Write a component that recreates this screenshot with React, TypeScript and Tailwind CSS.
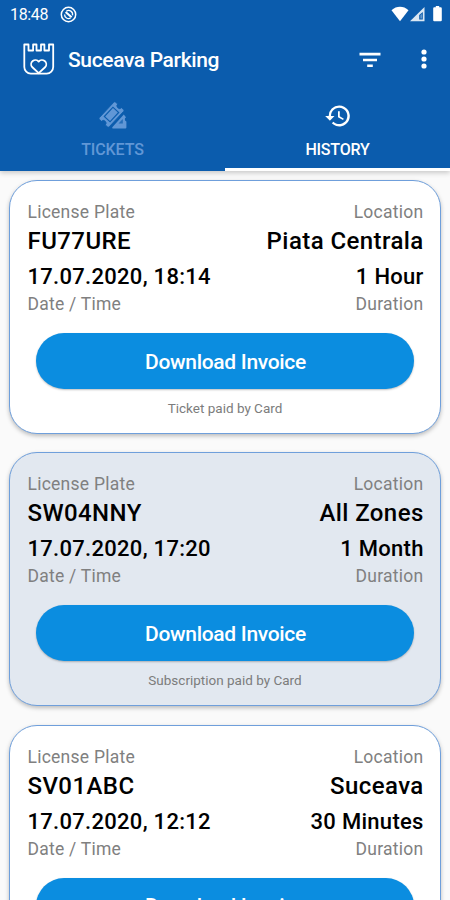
type Ticket = {
  plate: string;
  location: string;
  date: string;
  duration: string;
  note: string;
  shaded?: boolean;
};

const tickets: Ticket[] = [
  { plate: "FU77URE", location: "Piata Centrala", date: "17.07.2020, 18:14", duration: "1 Hour", note: "Ticket paid by Card" },
  { plate: "SW04NNY", location: "All Zones", date: "17.07.2020, 17:20", duration: "1 Month", note: "Subscription paid by Card", shaded: true },
  { plate: "SV01ABC", location: "Suceava", date: "17.07.2020, 12:12", duration: "30 Minutes", note: "Ticket paid by Card" },
];

function StatusBar() {
  return (
    <div className="flex h-7 items-center pl-[10px] pr-[7px] pt-[1px]">
      <span className="w-[39px] text-[16px] leading-5 tracking-[-0.35px]">18:48</span>
      <svg className="-mt-[1px] ml-[11px]" width="17" height="17" viewBox="0 0 17 17" fill="none" stroke="currentColor">
        <circle cx="8.5" cy="8.5" r="7.2" strokeWidth="1.5" />
        <path d="M4.6 8.4a4 4 0 0 0 6 3.6M6.4 5.1a4 4 0 0 1 6.1 4.2" strokeWidth="1.3" />
        <path d="M5.6 6 11.6 11.2" strokeWidth="2.1" />
      </svg>
      <svg className="-mt-[1px] ml-auto" width="52" height="18" viewBox="0 0 52 18" fill="currentColor">
        <path d="M0.5 5.2C5.5 0.7 12.5 0.7 17.5 5.2L9 16.2Z" />
        <path d="M33.5 2v14.2H19Z" fillOpacity="0.85" />
        <path d="M31.8 7v7.4h-3.6V10Z" fill="#0b5cad" />
        <path d="M30.6 9v4.6h-1V10Z" fillOpacity="0.6" />
        <path d="M43.3 2.3h1.5V1h3.4v1.3h1.5q1.1 0 1.1 1.1v11.8q0 1.1-1.1 1.1h-6.4q-1.1 0-1.1-1.1V3.4q0-1.1 1.1-1.1Z" />
      </svg>
    </div>
  );
}

function Toolbar() {
  return (
    <div className="flex h-16 items-center pl-[22px] pr-[19.5px]">
      <svg className="-mt-[2px]" width="33" height="34" viewBox="0 0 33 34" fill="none" stroke="currentColor" strokeWidth="1.8" strokeLinejoin="round">
        <path d="M2.3 2.5h4.2v6h4.6v-6h3.4v6H19v-6h3.4v6H27v-6h4.2v22.6a6.5 6.5 0 0 1-6.5 6.5H8.8a6.5 6.5 0 0 1-6.5-6.5Z" />
        <path d="M16.7 31.2 10.1 25a4.1 4.1 0 0 1 6.6-5.4 4.1 4.1 0 0 1 6.6 5.4Z" />
      </svg>
      <h1 className="ml-[13px] text-[21px] font-medium leading-7 tracking-[-0.36px] whitespace-nowrap">Suceava Parking</h1>
      <svg className="-mt-[1px] ml-auto" width="22" height="16" viewBox="0 0 22 16" fill="currentColor">
        <path d="M0.5 0.8h21v2.6h-21zM4 6.8h14v2.5H4zM8.2 12.5h5.6v2.4H8.2z" />
      </svg>
      <svg className="-mt-[2px] ml-[36px]" width="14" height="22" viewBox="0 0 14 22" fill="currentColor">
        <circle cx="7" cy="4" r="2.6" />
        <circle cx="7" cy="11" r="2.6" />
        <circle cx="7" cy="18" r="2.6" />
      </svg>
    </div>
  );
}

function Tabs() {
  return (
    <div className="grid h-[79px] grid-cols-2 text-[16px] font-medium leading-5">
      <div className="flex flex-col items-center pt-[9px] text-[#6197d6]">
        <svg width="30" height="30" viewBox="0 0 30 30" fill="currentColor">
          <path d="M25.8 13.6 28 16.2a2.3 2.3 0 0 0 .4 4.2v6.2a1 1 0 0 1-1 1H15.2a1 1 0 0 1-.7-1.7Z" />
          <path d="m20.5 22.5 4.3-4.5v4.5Z" fill="#0b5cad" fillOpacity="0.7" />
          <g transform="rotate(-47 13.5 13.5)" stroke="#0b5cad" strokeWidth="0.8">
            <path d="M3 6.8h21a1.3 1.3 0 0 1 1.3 1.3v2.8a2.6 2.6 0 0 0 0 5.2v2.8a1.3 1.3 0 0 1-1.3 1.3H3a1.3 1.3 0 0 1-1.3-1.3v-2.8a2.6 2.6 0 0 0 0-5.2V8.1A1.3 1.3 0 0 1 3 6.8Z" />
            <path d="M7.2 9.6h12.6v7.8H7.2z" strokeWidth="1.2" />
          </g>
        </svg>
        <span className="mt-[9px] tracking-[-0.1px]">TICKETS</span>
      </div>
      <div className="flex flex-col items-center border-b-[3px] border-white pt-[10px]">
        <svg width="28" height="28" viewBox="0 0 24 24" fill="currentColor">
          <path d="M13 3a9 9 0 0 0-9 9H1l3.9 3.9.1.1L9 12H6a7 7 0 1 1 2.1 4.9l-1.4 1.4A9 9 0 1 0 13 3Zm-1 5v5l4.3 2.5.7-1.2-3.5-2.1V8H12Z" />
        </svg>
        <span className="mt-[10px] tracking-[-0.2px]">HISTORY</span>
      </div>
    </div>
  );
}

function TicketCard({ ticket }: { ticket: Ticket }) {
  return (
    <article
      className={`h-[254px] shrink-0 rounded-[28px] border border-[#6f9fdb] px-[17.5px] pt-[19px] shadow-[0_2px_4px_rgba(0,0,0,0.25)] ${ticket.shaded ? "bg-[#e2e8f0]" : "bg-white"}`}
    >
      <div className="flex h-[27px] justify-between text-[17.5px] leading-6 tracking-[0.25px] text-[#808080]">
        <span>License Plate</span>
        <span className="-mr-[0.9px]">Location</span>
      </div>
      <div className="flex h-9 justify-between text-[24px] font-medium leading-7 tracking-[0.42px] text-black">
        <span>{ticket.plate}</span>
        <span className="-mr-[1.2px]">{ticket.location}</span>
      </div>
      <div className="flex h-[29px] justify-between text-[22px] font-medium leading-7 tracking-[0.29px] text-black">
        <span>{ticket.date}</span>
        <span className="-mr-[1.2px]">{ticket.duration}</span>
      </div>
      <div className="flex h-[41px] justify-between text-[17.5px] leading-6 tracking-[0.25px] text-[#808080]">
        <span>Date / Time</span>
        <span className="-mr-[0.9px]">Duration</span>
      </div>
      <button className="mx-[8.5px] flex h-14 w-[378px] items-center justify-center rounded-full bg-[#0b8de0] pl-[1px] pt-[3px] text-[21px] font-medium tracking-[-0.32px] text-white shadow-[0_1px_2px_rgba(0,0,0,0.25)]">
        Download Invoice
      </button>
      <p className="mt-[9px] text-center text-[13.5px] leading-5 text-[#7c7c7c]">{ticket.note}</p>
    </article>
  );
}

export default function App() {
  return (
    <main className="flex h-[900px] w-[450px] flex-col overflow-hidden bg-[#fafafa] font-['Roboto',sans-serif]">
      <header className="relative z-10 h-[171px] shrink-0 bg-[#0b5cad] text-white shadow-[0_2px_5px_rgba(0,0,0,0.2)]">
        <StatusBar />
        <Toolbar />
        <Tabs />
      </header>
      <section className="flex flex-col gap-[18.3px] px-[9px] pt-[9px]">
        {tickets.map((ticket) => (
          <TicketCard key={ticket.plate} ticket={ticket} />
        ))}
      </section>
    </main>
  );
}
